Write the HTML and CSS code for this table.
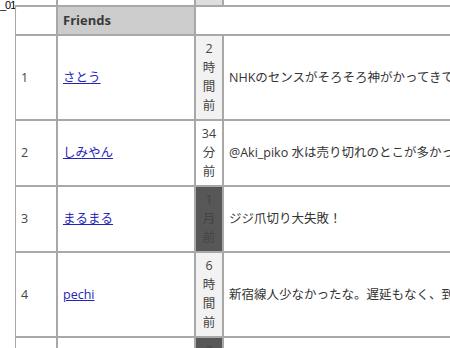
FILE: index.html
```html
<!DOCTYPE html>
<html lang="ja">
<head>
    <meta charset="UTF-8">
    <meta name="viewport" content="width=device-width, initial-scale=1.0">
    <title>Friends</title>
    <link rel="stylesheet" href="styles.css">
</head>
<body>
    <div class="page">
        <div class="tag">_01</div>

        <table class="friends">
            <colgroup>
                <col class="c-num">
                <col class="c-name">
                <col class="c-time">
                <col class="c-tweet">
            </colgroup>
            <tr class="tail">
                <td class="blank"></td>
                <td></td>
                <td class="time recent"></td>
                <td></td>
            </tr>
            <tr class="head">
                <td></td>
                <td class="title">Friends</td>
                <td colspan="2"></td>
            </tr>
            <tr>
                <td class="num">1</td>
                <td><a href="#">さとう</a></td>
                <td class="time hours">2時間前</td>
                <td class="tweet">NHKのセンスがそろそろ神がかってきてる</td>
            </tr>
            <tr>
                <td class="num">2</td>
                <td><a href="#">しみやん</a></td>
                <td class="time">34分前</td>
                <td class="tweet">@Aki_piko 水は売り切れのとこが多かったよ</td>
            </tr>
            <tr>
                <td class="num">3</td>
                <td><a href="#">まるまる</a></td>
                <td class="time old">1月前</td>
                <td class="tweet">ジジ爪切り大失敗！</td>
            </tr>
            <tr>
                <td class="num">4</td>
                <td><a href="#">pechi</a></td>
                <td class="time hours">6時間前</td>
                <td class="tweet">新宿線人少なかったな。遅延もなく、到着</td>
            </tr>
            <tr>
                <td class="num">5</td>
                <td><a href="#">ゆう</a></td>
                <td class="time old">2月前</td>
                <td class="tweet">おやすみなさい</td>
            </tr>
        </table>
    </div>
</body>
</html>
```

FILE: styles.css
```css
html, body {
    margin: 0;
    overflow: hidden;
}
body {
    font-family: "Open Sans", "Noto Sans CJK JP", sans-serif;
    font-size: 12.5px;
    color: #333;
    background-color: #fff;
}
.page {
    display: flex;
    align-items: flex-start;
}
.tag {
    width: 15px;
    flex: none;
    font-family: "Liberation Sans", sans-serif;
    font-size: 11px;
    line-height: 10px;
    letter-spacing: -1px;
    color: #000;
    white-space: nowrap;
}
.friends {
    border-collapse: separate;
    border-spacing: 0;
    table-layout: fixed;
    width: 600px;
    flex: none;
}
.c-num { width: 42px; }
.c-name { width: 138px; }
.c-time { width: 28px; }
.friends td {
    border: 1px solid #a8a8a8;
    padding: 3px 5px 4px 5px;
    line-height: 19px;
    vertical-align: middle;
}
.friends td.time {
    padding: 3px 4px 4px 4px;
    text-align: center;
    color: #444;
    word-break: break-all;
}
.friends .tail td {
    height: 5px;
    padding: 0;
    border-top: 0;
}
.tail .blank {
    border-left: 0;
}
.head td {
    line-height: 20px;
}
.title {
    background-color: #cccccc;
    color: #3a3a3a;
    font-weight: bold;
    font-size: 13px;
}
.num {
    color: #444;
}
.friends a {
    color: #2424b8;
}
.time.recent {
    background-color: #dedede;
}
.time.hours {
    background-color: #f2f2f2;
}
.time.old {
    background-color: #575757;
    color: #777;
}
.tweet {
    white-space: nowrap;
    overflow: hidden;
}
```
